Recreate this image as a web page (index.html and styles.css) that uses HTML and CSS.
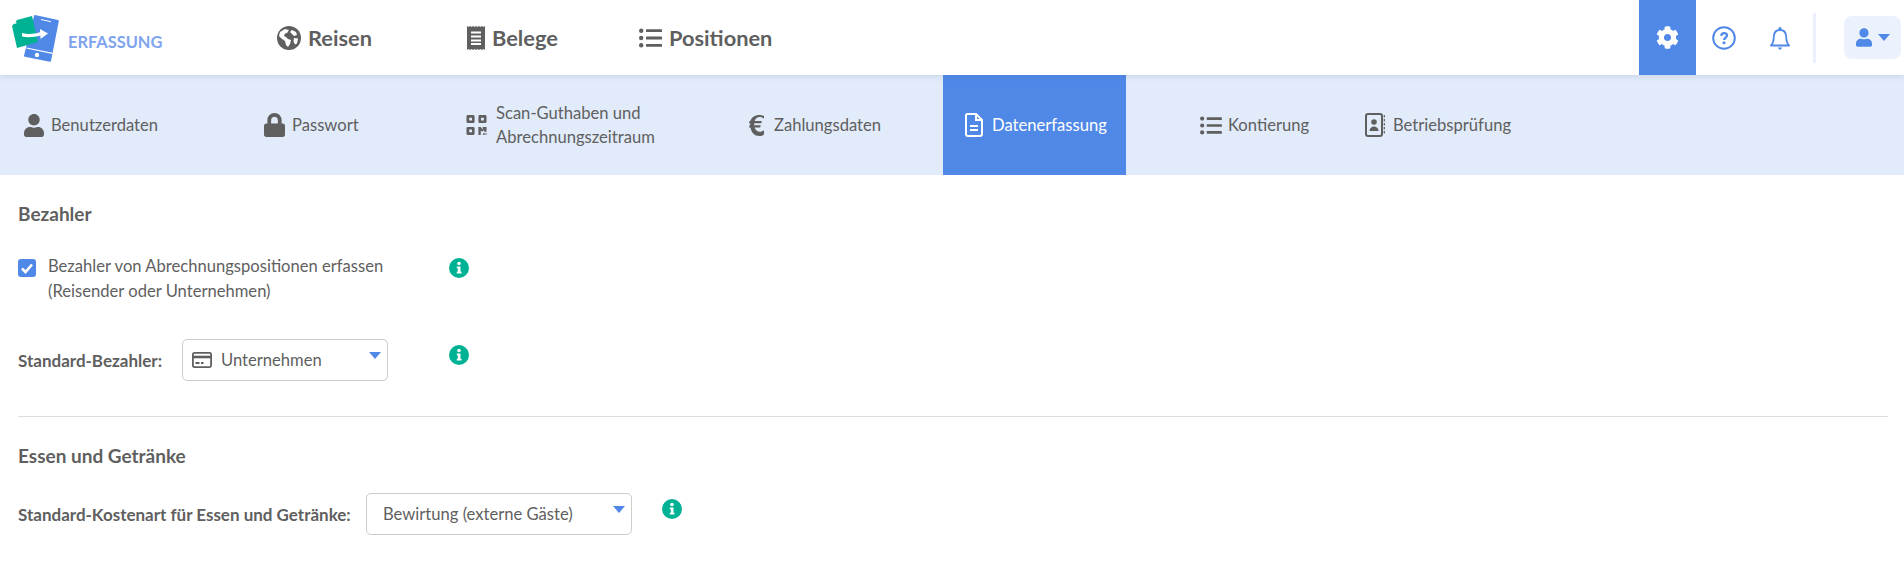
FILE: index.html
```html
<!DOCTYPE html>
<html lang="de">
<head>
<meta charset="UTF-8">
<meta name="viewport" content="width=device-width, initial-scale=1.0">
<title>Erfassung</title>
<link rel="stylesheet" href="styles.css">
</head>
<body>
<header class="topbar">
  <div class="brand">
    <svg class="logo" viewBox="10 11 50 52">
      <path d="M35 14l23 5q1 .2.800 1.200L51 60q-.2 1-1.200.8l-25-5q-1-.2-.8-1.200L34 15q.2-1.200 1-1z" fill="#5088e8"/>
      <path d="M41 18.500l10 2.200" stroke="#fff" stroke-width="1"/>
      <path d="M26.500 47l26 5.300" stroke="#fff" stroke-width="1.200"/>
      <circle cx="37" cy="54" r="2.200" fill="#fff"/>
      <path d="M17 19l15-4 6 26-21 6-5-22z" fill="#00b294"/>
      <path d="M16 20l-3 3 3.500-.5z" fill="#fff"/>
      <path d="M22 32c6 1.500 12 1 18-.8V28l8 4.500-7.500 5.500v-3.500c-6 1.500-12 2.500-18.500 1z" fill="#fff"/>
    </svg>
    <span class="brand-name">ERFASSUNG</span>
  </div>
  <nav class="mainnav">
    <a class="mainlink link-reisen">
      <svg class="icon-main" viewBox="0 0 24 24"><circle cx="12" cy="12" r="12" fill="#5f5f5f"/><path d="M3 6l5-3 4 1-2 3-2 .5L7 10l2 1 2 2 3 1-1 4-2 3-2-2-1-4-3-2-3-3zM15 4l4 2 1 3-3 1-2-2-2-2zM17 12l4 .5-1 5-2 1-1.500-3z" fill="#fff"/></svg>
      Reisen
    </a>
    <a class="mainlink link-belege">
      <svg class="icon-belege" viewBox="0 0 18 24"><path d="M0 0l1.500 1L3 0l1.500 1L6 0l1.500 1L9 0l1.500 1L12 0l1.500 1L15 0l1.500 1L18 0v24l-1.500-1-1.500 1-1.500-1-1.500 1-1.500-1L9 24l-1.500-1L6 24l-1.500-1L3 24l-1.500-1L0 24z" fill="#5f5f5f"/><path d="M4 6.500h10M4 10.500h10M4 14.500h10M4 18h10" stroke="#fff" stroke-width="1.800"/></svg>
      Belege
    </a>
    <a class="mainlink link-positionen">
      <svg class="icon-list-lg" viewBox="0 0 23 20"><use href="#list"/></svg>
      Positionen
    </a>
  </nav>
  <div class="tools">
    <a class="tool tool-active">
      <svg class="icon-cog" viewBox="0 0 512 512"><path fill="#fff" d="M487.400 315.700l-42.600-24.600c4.300-23.200 4.300-47 0-70.200l42.600-24.600c4.900-2.800 7.100-8.600 5.500-14-11.100-35.600-30-67.800-54.700-94.600-3.800-4.100-10-5.100-14.800-2.300L380.800 110c-17.900-15.400-38.500-27.300-60.800-35.100V25.800c0-5.600-3.900-10.500-9.400-11.700-36.700-8.200-74.300-7.800-109.200 0-5.500 1.200-9.400 6.100-9.400 11.700V75c-22.200 7.900-42.800 19.800-60.800 35.100L88.700 85.500c-4.900-2.800-11-1.900-14.800 2.300-24.700 26.700-43.600 58.900-54.700 94.600-1.700 5.400.6 11.200 5.500 14L67.300 221c-4.300 23.200-4.300 47 0 70.200l-42.600 24.600c-4.900 2.800-7.100 8.600-5.500 14 11.100 35.600 30 67.800 54.700 94.600 3.800 4.100 10 5.100 14.800 2.300l42.600-24.600c17.900 15.400 38.500 27.300 60.800 35.100v49.200c0 5.600 3.900 10.500 9.400 11.700 36.700 8.200 74.300 7.800 109.200 0 5.500-1.200 9.400-6.100 9.400-11.700v-49.200c22.200-7.900 42.800-19.800 60.800-35.100l42.600 24.600c4.900 2.800 11 1.900 14.800-2.300 24.700-26.700 43.600-58.900 54.700-94.600 1.500-5.500-.7-11.300-5.600-14.100zM256 336c-44.100 0-80-35.900-80-80s35.900-80 80-80 80 35.900 80 80-35.900 80-80 80z"/></svg>
    </a>
    <a class="tool">
      <svg class="icon-help" viewBox="0 0 24 24"><circle cx="12" cy="12" r="10.800" fill="none" stroke="#5088e8" stroke-width="2"/><path d="M9.200 9.800c.3-3.600 5.700-3.600 5.800-.2 0 2.200-2.900 2.100-2.900 4.300" fill="none" stroke="#5088e8" stroke-width="2.200"/><circle cx="12" cy="16.800" r="1.500" fill="#5088e8"/></svg>
    </a>
    <a class="tool">
      <svg class="icon-bell" viewBox="0 0 20 24"><path d="M1 19.500c2.500-2.500 2.700-4.500 2.800-9C4 6.500 6.500 4 10 4s6 2.500 6.200 6.500c.1 4.500.3 6.500 2.800 9z" fill="none" stroke="#5088e8" stroke-width="1.800" stroke-linejoin="round"/><circle cx="10" cy="2.500" r="1.600" fill="#5088e8"/><path d="M7.500 21.500h5L10 24z" fill="#5088e8"/></svg>
    </a>
    <span class="tool-sep"></span>
    <a class="userbtn">
      <svg class="icon-user-sm" viewBox="0 0 448 512"><use href="#user" fill="#5088e8"/></svg>
      <span class="caret"></span>
    </a>
  </div>
</header>

<nav class="subnav">
  <a class="tab">
    <svg class="icon-tab" viewBox="0 0 448 512"><use href="#user"/></svg>
    <span>Benutzerdaten</span>
  </a>
  <a class="tab">
    <svg class="icon-lock" viewBox="0 0 448 512"><path d="M400 224h-24v-72C376 68.200 307.800 0 224 0S72 68.200 72 152v72H48c-26.500 0-48 21.500-48 48v192c0 26.500 21.500 48 48 48h352c26.500 0 48-21.500 48-48V272c0-26.500-21.500-48-48-48zm-104 0H152v-72c0-39.700 32.300-72 72-72s72 32.300 72 72v72z"/></svg>
    <span>Passwort</span>
  </a>
  <a class="tab tab-scan">
    <svg class="icon-qr" viewBox="0 0 21 21"><path fill-rule="evenodd" d="M1.500 0h5.500A1.500 1.500 0 0 1 8.500 1.500V7A1.500 1.500 0 0 1 7 8.500H1.500A1.500 1.500 0 0 1 0 7V1.500A1.500 1.500 0 0 1 1.500 0zM2.800 2.800v3h3v-3zM14 0h5.500A1.500 1.500 0 0 1 21 1.500V7a1.500 1.500 0 0 1-1.500 1.500H14A1.500 1.500 0 0 1 12.500 7V1.500A1.500 1.500 0 0 1 14 0zM15.200 2.800v3h3v-3zM1.500 12.500H7A1.500 1.500 0 0 1 8.500 14v5.500A1.500 1.500 0 0 1 7 21H1.500A1.500 1.500 0 0 1 0 19.500V14a1.500 1.500 0 0 1 1.500-1.500zM2.800 15.200v3h3v-3zM12.500 12.500h2.500l2 3v-3h4v5h-2.500v-2.500l-1 2h-2l-.5-1V21h-2.500zM17.500 19h1.500v2h-1.500zM20 19h1v2h-1z"/></svg>
    <span>Scan-Guthaben und<br>Abrechnungszeitraum</span>
  </a>
  <a class="tab tab-euro">
    <svg class="icon-euro" viewBox="0 0 15 21"><path d="M15 3.500C13.700 2.600 12.300 2 10.800 2 8.300 2 6.400 3.500 5.600 6h7.200l-.5 2.200H5.200v2.100h6.500l-.5 2.200H5.600c.8 2.600 2.700 4.300 5.200 4.300 1.600 0 3-.6 4.200-1.500v4.100c-1.300.9-2.800 1.600-4.600 1.600-4.800 0-8-3.400-9-8.500H0l.5-2.200h.7V8.200H0L.5 6h.8C2.400 2.600 5.700 0 10.300 0 12 0 13.600.4 15 1z"/></svg>
    <span>Zahlungsdaten</span>
  </a>
  <a class="tab tab-active">
    <svg class="icon-doc" viewBox="0 0 18 24"><path d="M2 1h9l6 6v14a2 2 0 0 1-2 2H3a2 2 0 0 1-2-2V2z" fill="none" stroke="#fff" stroke-width="2"/><path d="M11 1v6h6M5 13h8M5 17h8" fill="none" stroke="#fff" stroke-width="2"/></svg>
    <span>Datenerfassung</span>
  </a>
  <a class="tab tab-konto">
    <svg class="icon-list" viewBox="0 0 23 20"><use href="#list"/></svg>
    <span>Kontierung</span>
  </a>
  <a class="tab tab-book">
    <svg class="icon-book" viewBox="0 0 20 24"><rect x="1" y="1" width="16" height="22" rx="2" fill="none" stroke="#5f5f5f" stroke-width="2"/><circle cx="9" cy="9" r="2.800" fill="#5f5f5f"/><path d="M4.500 18c0-6 9-6 9 0z" fill="#5f5f5f"/><path d="M19.300 2v20" stroke="#5f5f5f" stroke-width="1.200" stroke-dasharray="2.500 1.500"/></svg>
    <span>Betriebsprüfung</span>
  </a>
</nav>

<main class="content">
  <section class="block block-payer">
    <h2>Bezahler</h2>
    <div class="check-row">
      <span class="checkbox">
        <svg viewBox="0 0 18 18"><path d="M4 9.500l3.500 3.500L14 5.500" fill="none" stroke="#fff" stroke-width="2.600"/></svg>
      </span>
      <span class="check-label">Bezahler von Abrechnungspositionen erfassen<br>(Reisender oder Unternehmen)</span>
      <svg class="info info-check" viewBox="0 0 20 20"><use href="#info"/></svg>
    </div>
    <div class="field-row">
      <label class="label-payer">Standard-Bezahler:</label>
      <div class="select select-payer">
        <svg class="icon-card" viewBox="0 0 20 16"><rect x=".9" y=".9" width="18.200" height="14.200" rx="1.500" fill="none" stroke="#5f5f5f" stroke-width="1.800"/><path d="M1 5h18" stroke="#5f5f5f" stroke-width="2.600"/><path d="M3.500 11h4M9 11h2.500" stroke="#5f5f5f" stroke-width="1.800"/></svg>
        <span>Unternehmen</span>
        <span class="caret caret-select"></span>
      </div>
      <svg class="info info-payer" viewBox="0 0 20 20"><use href="#info"/></svg>
    </div>
  </section>
  <section class="block block-food">
    <h2>Essen und Getränke</h2>
    <div class="field-row">
      <label class="label-food">Standard-Kostenart für Essen und Getränke:</label>
      <div class="select select-food">
        <span>Bewirtung (externe Gäste)</span>
        <span class="caret caret-select"></span>
      </div>
      <svg class="info info-food" viewBox="0 0 20 20"><use href="#info"/></svg>
    </div>
  </section>
</main>

<svg class="defs" width="0" height="0">
  <defs>
    <path id="user" d="M224 256c70.700 0 128-57.300 128-128S294.700 0 224 0 96 57.300 96 128s57.300 128 128 128zm89.600 32h-16.700c-22.200 10.200-46.900 16-72.900 16s-50.600-5.800-72.900-16h-16.700C60.200 288 0 348.200 0 422.400V464c0 26.500 21.500 48 48 48h352c26.500 0 48-21.500 48-48v-41.600c0-74.200-60.200-134.400-134.400-134.400z"/>
    <g id="list">
      <circle cx="2.200" cy="2.700" r="2.200"/><circle cx="2.200" cy="10" r="2.200"/><circle cx="2.200" cy="17.300" r="2.200"/>
      <rect x="7" y="1.300" width="16" height="2.800" rx=".5"/><rect x="7" y="8.600" width="16" height="2.800" rx=".5"/><rect x="7" y="15.900" width="16" height="2.800" rx=".5"/>
    </g>
    <g id="info">
      <circle cx="10" cy="10" r="10" fill="#00b294"/>
      <circle cx="10" cy="5.500" r="1.800" fill="#fff"/>
      <path d="M7.800 8.500h3.700v5.300h1v1.800H7.800v-1.800h1v-3.500h-1z" fill="#fff"/>
    </g>
  </defs>
</svg>
</body>
</html>
```

FILE: styles.css
```css
* { box-sizing: border-box; }
body { margin: 0; background: #fff; color: #5f5f5f; font-family: Lato, "Noto Sans", Arial, sans-serif; font-size: 16.6px; }
svg { display: block; flex: none; fill: #5f5f5f; }
.defs { position: absolute; }

.topbar { display: flex; height: 75px; background: #fff; position: relative; box-shadow: 0 1px 6px rgba(80, 100, 150, .18); }
.brand { display: flex; align-items: center; width: 288px; padding-left: 10px; }
.logo { width: 50px; height: 52px; }
.brand-name { color: #7ea4ee; font-size: 16.4px; font-weight: 700; margin: 7px 0 0 8px; }
.mainnav { display: flex; }
.mainlink { display: flex; align-items: center; gap: 7px; font-size: 21.8px; font-weight: 700; }
.link-reisen { margin-left: -11px; width: 190px; }
.link-belege { width: 172px; }
.icon-main { width: 24px; height: 24px; }
.icon-belege { width: 18px; height: 24px; }
.icon-list-lg { width: 23px; height: 20px; }

.tools { display: flex; align-items: center; margin-left: auto; padding-right: 3px; }
.tool { display: flex; align-items: center; justify-content: center; width: 56px; height: 75px; }
.tool-active { background: #5088e8; width: 57px; }
.icon-cog { width: 23px; height: 23px; }
.icon-help { width: 24px; height: 24px; }
.icon-bell { width: 20px; height: 24px; }
.tool-sep { width: 3px; height: 50px; margin: 0 28px 0 5px; background: #ebf2fd; }
.userbtn { display: flex; align-items: center; justify-content: center; gap: 6px; width: 57px; height: 43px; border-radius: 8px; background: #ebf2fd; }
.icon-user-sm { width: 16px; height: 19px; fill: #5088e8; }
.caret { width: 0; height: 0; border-left: 6px solid transparent; border-right: 6px solid transparent; border-top: 7px solid #5088e8; }

.subnav { display: grid; grid-template-columns: 240px 202px 283px 218px 183px 220px auto; justify-content: start; height: 100px; background: #e1ebfa; }
.tab { display: flex; align-items: center; gap: 7px; padding-left: 24px; line-height: 24px; }
.tab-scan { gap: 9px; }
.tab-active { background: #5088e8; color: #fff; padding-left: 22px; gap: 9px; }
.tab-konto { padding-left: 74px; gap: 6px; }
.tab-book { padding-left: 19px; gap: 8px; }
.icon-tab { width: 20px; height: 23px; }
.icon-lock { width: 21px; height: 24px; }
.icon-qr { width: 21px; height: 20px; }
.icon-euro { width: 15px; height: 21px; margin-right: 3px; }
.icon-doc { width: 18px; height: 24px; }
.icon-list { width: 22px; height: 19px; }
.icon-book { width: 20px; height: 24px; }

.content { padding: 0 16px 0 18px; }
.block h2 { margin: 0; font-size: 19px; font-weight: 700; line-height: 24px; }
.block-payer { padding: 27px 0 35px; border-bottom: 1px solid #ddd; }
.block-food { padding-top: 27px; }

.check-row { display: flex; margin-top: 28px; line-height: 25px; }
.checkbox { display: block; width: 18px; height: 18px; margin-top: 5px; border-radius: 3px; background: #5088e8; }
.check-label { width: 401px; margin-left: 12px; }
.info { width: 20px; height: 20px; }
.info-check { margin-top: 4px; }

.field-row { display: flex; align-items: center; margin-top: 35px; }
.field-row label { font-size: 17px; font-weight: 700; }
.label-payer { width: 164px; }
.label-food { width: 348px; }
.block-food .field-row { margin-top: 25px; }
.select { display: flex; align-items: center; position: relative; height: 42px; border: 1px solid #ccc; border-radius: 5px; background: #fff; }
.select-payer { width: 206px; padding-left: 9px; gap: 9px; }
.select-food { width: 266px; padding-left: 16px; }
.icon-card { width: 20px; height: 16px; }
.caret-select { position: absolute; right: 6px; top: 12px; }
.info-payer { margin: -10px 0 0 61px; }
.info-food { margin: -10px 0 0 30px; }
```
